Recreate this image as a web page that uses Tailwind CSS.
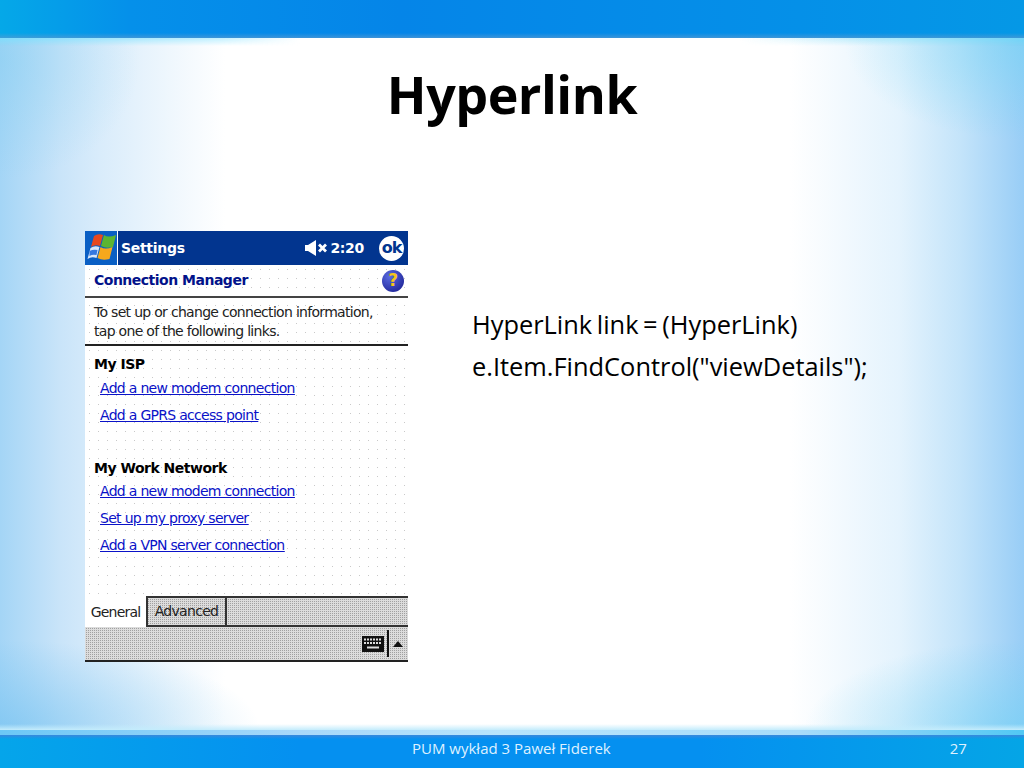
<!DOCTYPE html>
<html lang="en">
<head>
  <meta charset="UTF-8">
  <title>Hyperlink</title>
  <script src="https://cdn.jsdelivr.net/npm/@tailwindcss/browser@4"></script>
</head>
<body class="w-[1024px] h-[768px] overflow-hidden font-['Open_Sans',sans-serif] bg-white">
  <div class="w-full h-full flex flex-col bg-[radial-gradient(ellipse_260px_90px_at_0_730px,#6fc0f099,transparent),radial-gradient(ellipse_220px_90px_at_1024px_730px,#6fd0f499,transparent),radial-gradient(ellipse_180px_100px_at_1024px_40px,#6fd4f488,transparent),radial-gradient(ellipse_140px_120px_at_0_60px,#80cef066,transparent),linear-gradient(90deg,#a4d5f6_0,#c9e4f9_60px,#d9ecfb_100px,#eff7fd_170px,#ffffff_225px,#ffffff_790px,#e4f3fd_900px,#c4e4fa_960px,#98cdf6_1024px)]">
    <!-- top bar -->
    <div class="h-[38px] shrink-0 bg-[linear-gradient(180deg,#ffffff00_0,#ffffff00_33px,#5a9ad0aa_38px),linear-gradient(90deg,#05a8e8,#0590ea_130px,#0585e8_400px,#0590e8_800px,#0598e6)]"></div>
    <div class="h-[8px] shrink-0 bg-[linear-gradient(90deg,#7fdcfb,#c0f0ff_220px,#ffffff00_300px,#ffffff00_740px,#a8e8fb_900px,#70d4f6)] [mask-image:linear-gradient(180deg,#000,transparent)]"></div>

    <!-- slide -->
    <main class="flex-1 flex flex-col">
      <h1 class="h-[103px] pt-[14px] text-center text-[52px] leading-[68px] font-bold text-black tracking-[-0.5px]">Hyperlink</h1>
      <div class="flex pt-[82px] pl-[85px]">
        <!-- device -->
        <div class="w-[323px] h-[431px] flex flex-col bg-white font-['DejaVu_Sans',sans-serif] text-[14px] text-[#222] tracking-[-0.7px]">
          <div class="h-[34px] shrink-0 flex items-center bg-[#02358f] text-white font-bold">
            <div class="w-[33px] h-full flex items-center justify-center bg-[#0a5fc4] border-r border-white">
              <svg width="31" height="30" viewBox="0 0 31 30">
                <path d="M8 3q4-3 9-1l-3 11q-5-2-9 1z" fill="#e8481e"/>
                <path d="M18 2q4 3 12 0l-3 12q-7 2-12-1z" fill="#5cb531"/>
                <path d="M4.500 15q4-3 9-1l-3 11q-5-2-9 1z" fill="#d8e6fa"/>
                <path d="M3.500 18q4-2 8-1l-1 5q-4-1-7 1z" fill="#3578e0"/>
                <path d="M14.500 14q5 3 12 0l-3 12q-7 2-12-1z" fill="#f6a81c"/>
              </svg>
            </div>
            <span class="ml-[3px] text-[14px] tracking-[-0.3px]">Settings</span>
            <svg class="ml-auto" width="24" height="16" viewBox="0 0 24 16">
              <path d="M0 5h3l8-5v16l-8-5H0z" fill="#fff"/>
              <path d="M14 4.500l7 7M21 4.500l-7 7" stroke="#fff" stroke-width="2.800"/>
            </svg>
            <span class="ml-[1px] text-[14px] tracking-[-0.3px]">2:20</span>
            <span class="w-[25px] h-[25px] mr-[4px] ml-[15px] rounded-full bg-white text-[#02358f] flex items-center justify-center text-[16px] tracking-[-1px]">ok</span>
          </div>
          <div class="flex-1 flex flex-col bg-[radial-gradient(circle,#c9c9c9_0.7px,transparent_0.9px)] bg-[size:9px_9px]">
            <div class="h-[33px] shrink-0 flex items-center justify-between pl-[9px] pr-[4px] border-b-2 border-[#444] font-bold text-[#02128a] tracking-[-0.5px]">
              <span>Connection Manager</span>
              <span class="w-[22px] h-[22px] rounded-full bg-[radial-gradient(circle_at_35%_30%,#5a6be0,#14188a)] text-[#f5c518] flex items-center justify-center text-[17px] font-bold">?</span>
            </div>
            <div class="h-[48px] shrink-0 pl-[9px] pt-[5px] leading-[19px] border-b-2 border-[#222]">
              <p>To set up or change connection information,</p>
              <p>tap one of the following links.</p>
            </div>
            <div class="h-[112px] shrink-0 pl-[9px] pt-[8px]">
              <p class="font-bold leading-[20px] tracking-[-0.5px] text-black">My ISP</p>
              <div class="flex flex-col pl-[6px] pt-[4px] gap-[7px] text-[#0a12c8] underline leading-[20px]">
                <a>Add a new modem connection</a>
                <a>Add a GPRS access point</a>
              </div>
            </div>
            <div class="flex-1 pl-[9px]">
              <p class="font-bold leading-[20px] tracking-[-0.5px] text-black">My Work Network</p>
              <div class="flex flex-col pl-[6px] pt-[3px] gap-[7px] text-[#0a12c8] underline leading-[20px]">
                <a>Add a new modem connection</a>
                <a>Set up my proxy server</a>
                <a>Add a VPN server connection</a>
              </div>
            </div>
          </div>
          <!-- tabs -->
          <div class="h-[31px] shrink-0 flex bg-[linear-gradient(#dcdcdc_1px,transparent_1px),linear-gradient(90deg,#dcdcdc_1px,transparent_1px)] bg-[size:2px_2px] bg-[#a0a0a0]">
            <div class="w-[61px] bg-white flex items-center justify-center border-t-2 border-transparent tracking-[-0.8px]">General</div>
            <div class="w-[81px] flex items-center justify-center border-x-2 border-y-2 border-[#333] tracking-[-0.7px]">Advanced</div>
            <div class="flex-1 border-t-2 border-b-2 border-[#333]"></div>
          </div>
          <div class="h-[35px] shrink-0 flex items-center justify-end pr-[5px] border-b-2 border-[#222] bg-[linear-gradient(#dcdcdc_1px,transparent_1px),linear-gradient(90deg,#dcdcdc_1px,transparent_1px)] bg-[size:2px_2px] bg-[#a0a0a0]">
            <svg width="22" height="16" viewBox="0 0 22 16">
              <rect x="0" y="0" width="22" height="16" fill="#111"/>
              <path d="M2 3.500h18M2 7h18" stroke="#ddd" stroke-width="2" stroke-dasharray="2 1"/>
              <path d="M5 11.500h12" stroke="#ddd" stroke-width="2"/>
            </svg>
            <div class="w-[2px] h-[27px] ml-[3px] bg-[#111]"></div>
            <svg class="ml-[4px]" width="10" height="6" viewBox="0 0 10 6"><path d="M5 0l5 6H0z" fill="#111"/></svg>
          </div>
        </div>
        <!-- code -->
        <div class="ml-[64px] pt-[72px] text-[25.4px] leading-[42px] text-black">
          <p class="[word-spacing:-2px]">HyperLink link = (HyperLink)</p>
          <p>e.Item.FindControl("viewDetails");</p>
        </div>
      </div>
    </main>

    <!-- footer -->
    <div class="h-[6px] shrink-0 bg-[linear-gradient(180deg,#ffffff00,#c4ecfc)]"></div>
    <div class="h-[5px] shrink-0 bg-[linear-gradient(90deg,#6cc8f6,#a8d8fa_300px,#b8e4fc_500px,#a8dcfa_800px,#52c8f4)]"></div>
    <footer class="h-[33px] shrink-0 flex items-center pb-[6px] text-[15px] text-[#dff1ff] bg-[linear-gradient(180deg,#3a88dc_0,#ffffff00_4px),linear-gradient(90deg,#05a5ea,#0590f0_300px,#0590f0_700px,#05a5e6)]">
      <span class="ml-[412px]">PUM wykład 3 Paweł Fiderek</span>
      <span class="ml-[339px]">27</span>
    </footer>
  </div>
</body>
</html>
